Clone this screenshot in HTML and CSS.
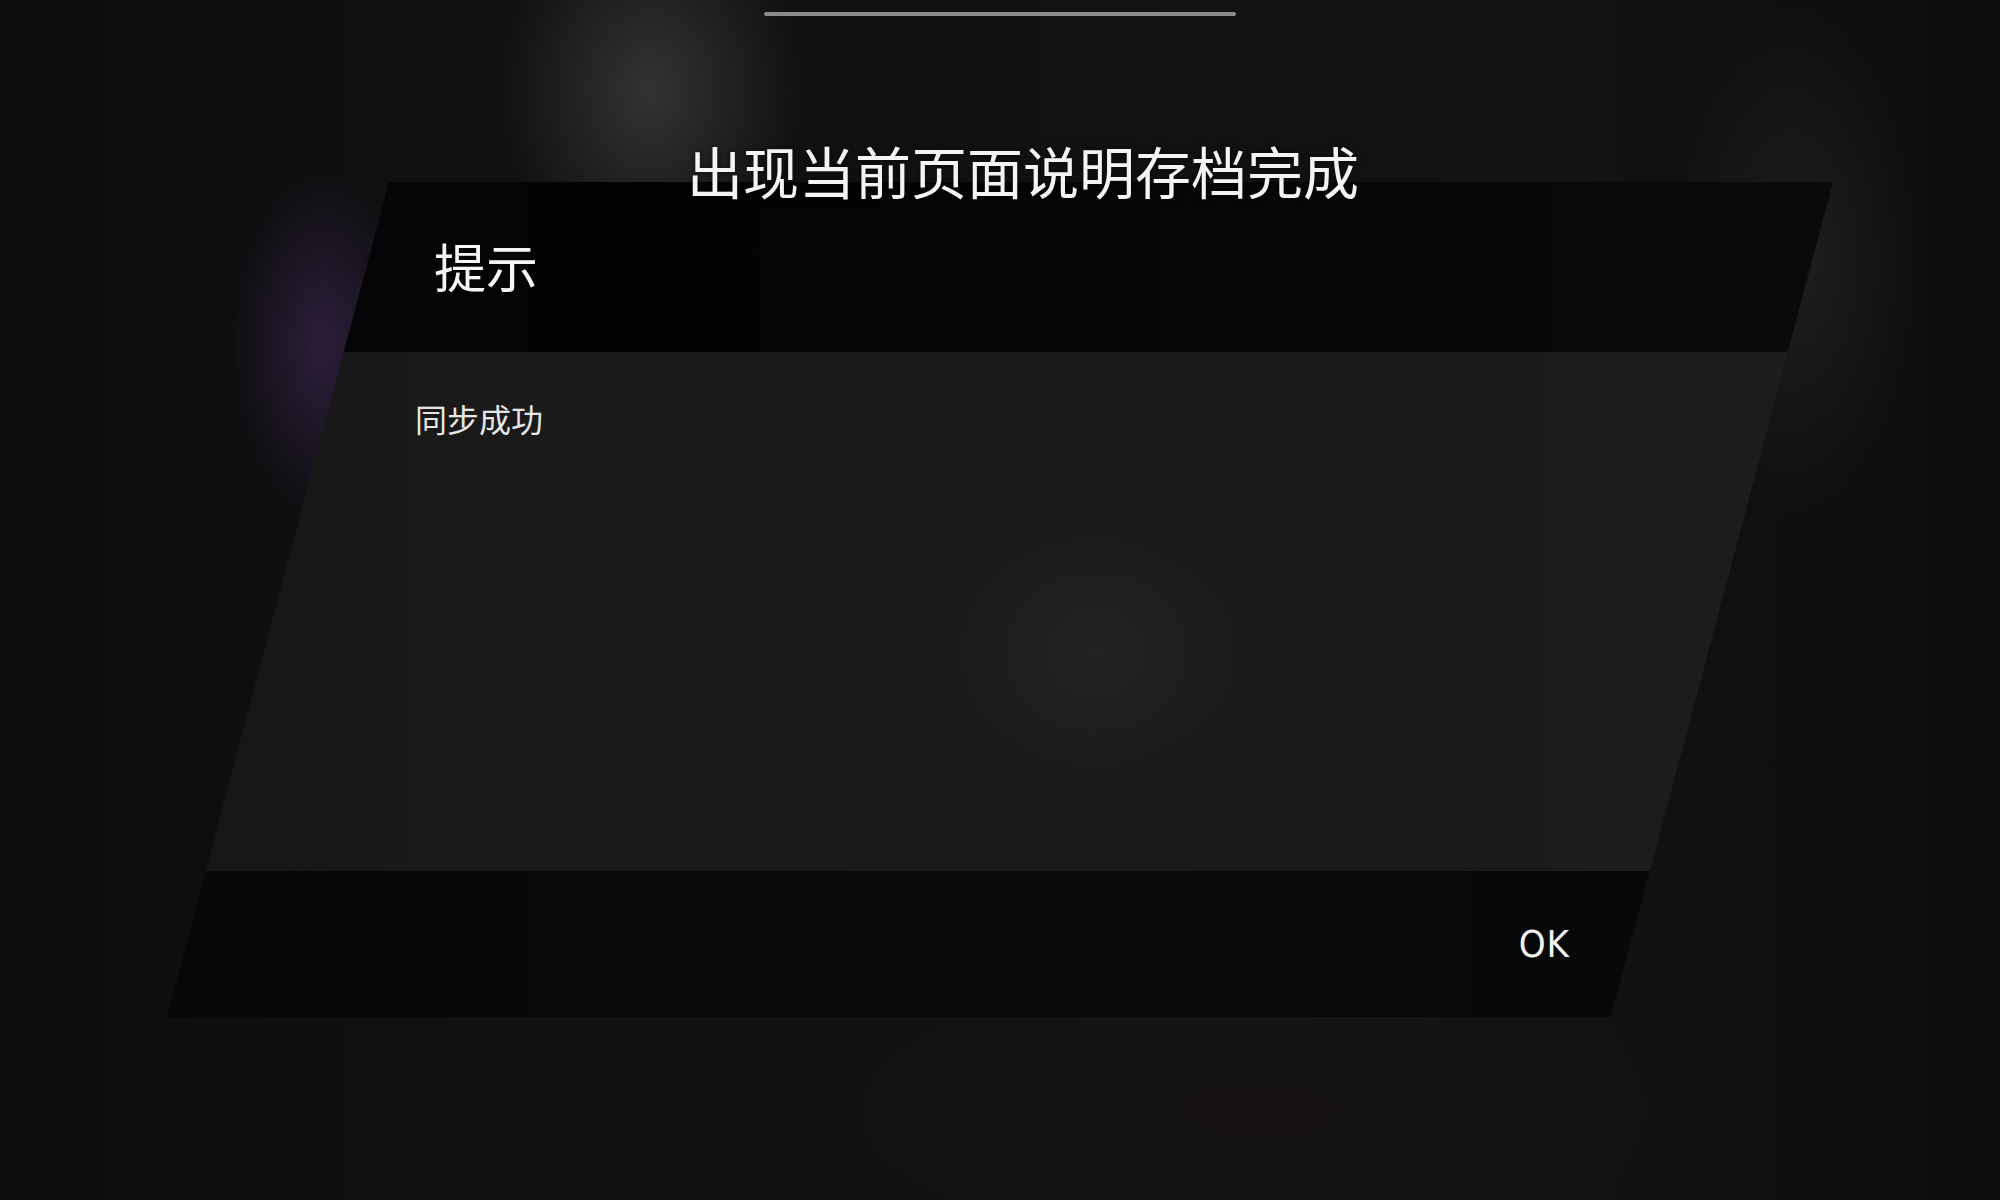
FILE: index.html
```html
<!DOCTYPE html>
<html lang="zh-CN">
<head>
    <meta charset="UTF-8">
    <meta name="viewport" content="width=device-width, initial-scale=1.0">
    <title>提示</title>
    <link rel="stylesheet" href="styles.css">
</head>
<body>
    <div class="screen">
        <div class="home-bar"></div>

        <h1 class="caption">出现当前页面说明存档完成</h1>

        <div class="dialog">
            <div class="dialog-head">
                <h2>提示</h2>
            </div>
            <div class="dialog-body">
                <p>同步成功</p>
            </div>
            <div class="dialog-foot">
                <button class="ok-btn">OK</button>
            </div>
        </div>
    </div>
</body>
</html>
```

FILE: styles.css
```css
html, body {
    margin: 0;
    padding: 0;
}
body {
    width: 2000px;
    height: 1200px;
    overflow: hidden;
    font-family: "Noto Sans CJK SC", "Noto Sans", sans-serif;
    color: #f2f2f2;
    background-color: #0f0f11;
    background-image:
        radial-gradient(ellipse 150px 190px at 650px 90px, rgba(62, 62, 62, 0.75), rgba(62, 62, 62, 0) 100%),
        radial-gradient(ellipse 90px 170px at 322px 345px, rgba(80, 48, 112, 0.45), rgba(80, 48, 112, 0) 100%),
        radial-gradient(ellipse 130px 260px at 1800px 260px, rgba(48, 48, 50, 0.45), rgba(48, 48, 50, 0) 100%),
        radial-gradient(ellipse 420px 140px at 1260px 1110px, rgba(30, 20, 22, 0.4), rgba(30, 20, 22, 0) 100%),
        linear-gradient(90deg, #0c0c0e 0%, #111113 25%, #121214 60%, #121214 80%, #0c0c0e 100%);
}

.screen {
    position: relative;
    height: 1200px;
    display: flex;
    flex-direction: column;
    align-items: center;
}

.home-bar {
    width: 472px;
    height: 4px;
    margin-top: 12px;
    border-radius: 2px;
    background: #8c8c8c;
}

/* caption sits over the top edge of the dialog */
.caption {
    position: absolute;
    top: 136px;
    left: 0;
    right: 0;
    margin: 0;
    padding-left: 46px;
    text-align: center;
    font-size: 56px;
    font-weight: 400;
    line-height: 68px;
    color: #f4f4f4;
    z-index: 2;
    text-shadow: 0 0 6px rgba(0, 0, 0, 0.6);
}

.dialog {
    width: 1666px;
    height: 835px;
    margin-top: 166px;
    align-self: flex-start;
    margin-left: 167px;
    display: flex;
    flex-direction: column;
    clip-path: polygon(222px 0, 100% 0, calc(100% - 222px) 100%, 0 100%);
}

.dialog-head {
    height: 170px;
    flex: none;
    display: flex;
    align-items: center;
    padding-left: 267px;
    background: linear-gradient(90deg, #060508 0%, #030303 30%, #070707 70%, #0a0a0a 100%);
}
.dialog-head h2 {
    margin: 0;
    font-size: 52px;
    font-weight: 400;
    line-height: 1;
    margin-top: -2px;
    color: #f5f5f5;
}

.dialog-body {
    flex: 1;
    padding: 46px 0 0 248px;
    background-color: #1a1a1b;
    background-image:
        radial-gradient(ellipse 170px 150px at 930px 300px, rgba(255, 255, 255, 0.045), rgba(255, 255, 255, 0) 100%),
        linear-gradient(90deg, #161617 0%, #1a1a1b 20%, #19191a 60%, #1c1d1d 100%);
}
.dialog-body p {
    margin: 0;
    font-size: 32px;
    line-height: 40px;
    color: #e6e6e6;
}

.dialog-foot {
    height: 146px;
    flex: none;
    display: flex;
    align-items: center;
    justify-content: flex-end;
    padding-right: 263px;
    background: linear-gradient(90deg, #070707 0%, #0a0a0a 50%, #070707 100%);
}

.ok-btn {
    background: none;
    border: none;
    padding: 0;
    font-family: "DejaVu Sans Condensed", "DejaVu Sans", sans-serif;
    font-stretch: condensed;
    font-size: 38px;
    letter-spacing: 1px;
    color: #f2f2f2;
    cursor: pointer;
}
```
